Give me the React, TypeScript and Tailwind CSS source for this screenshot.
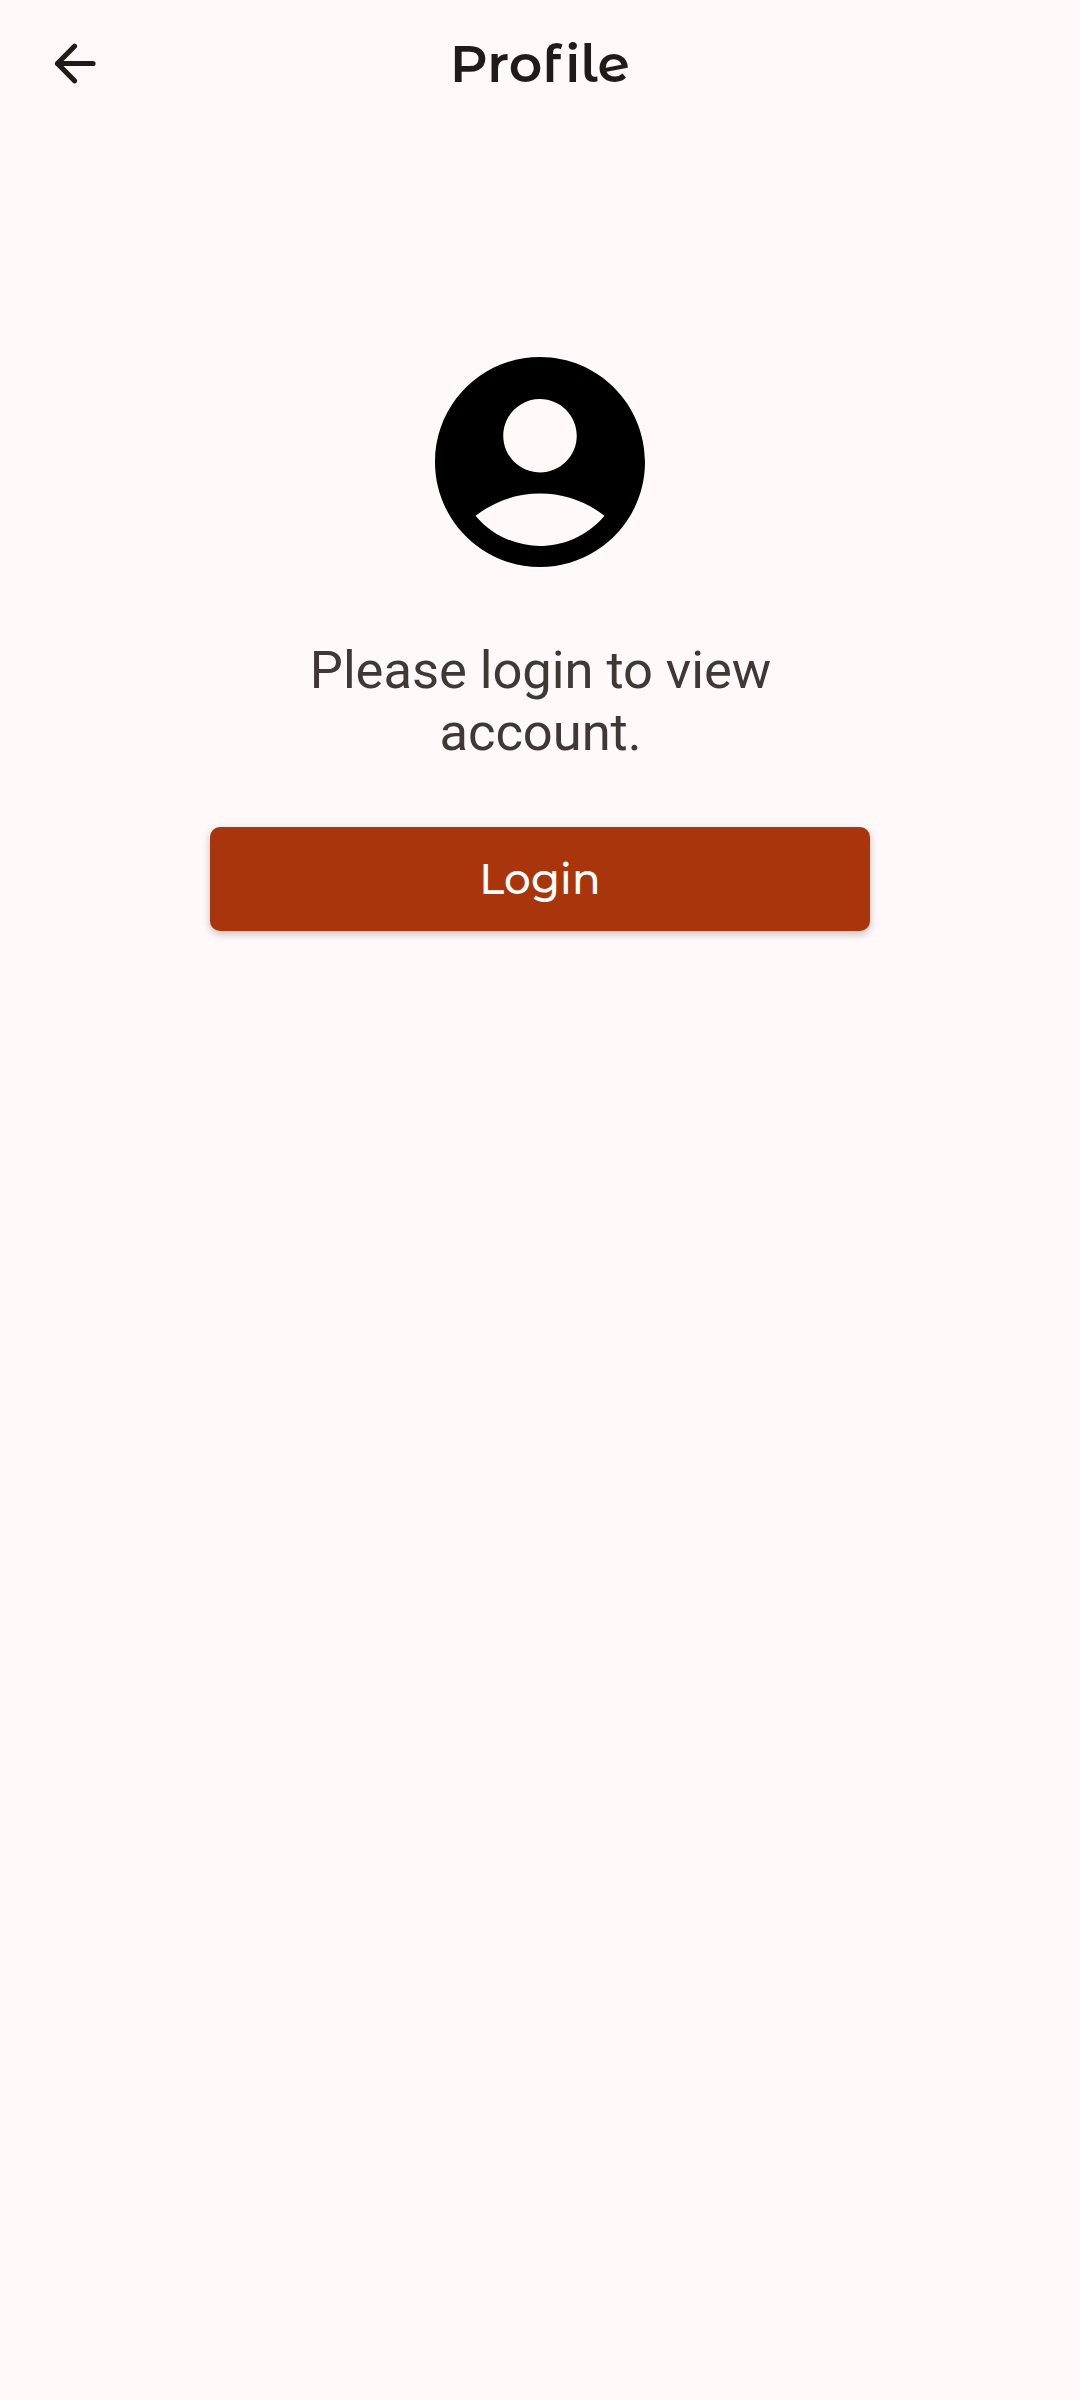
export default function App() {
  return (
    <main className="flex h-[2400px] w-[1080px] flex-col bg-[#fff9f9]">
      <header className="grid h-32 grid-cols-[150px_1fr_150px] items-center">
        <svg className="ml-[54px] h-[42px] w-[42px]" viewBox="0 0 42 42" fill="none" stroke="#201a18" strokeWidth="5.2" strokeLinecap="round" strokeLinejoin="round"><path d="M39 20.5H3.5M20.5 3.2L3.5 20.5L20.5 37.8" /></svg>
        <h1 className="text-center font-['Montserrat_Alternates','Montserrat','Inter',sans-serif] text-[52px] font-semibold tracking-[0.2px] text-[#201a18]">Profile</h1>
      </header>
      <section className="flex flex-col items-center pt-52">
        <svg className="h-[252px] w-[252px]" viewBox="0 0 24 24"><path d="M12 2C6.48 2 2 6.48 2 12s4.48 10 10 10 10-4.48 10-10S17.52 2 12 2zm0 4c1.93 0 3.5 1.57 3.5 3.5S13.93 13 12 13s-3.5-1.57-3.5-3.5S10.07 6 12 6zm0 14c-2.03 0-4.43-.82-6.14-2.88C7.55 15.8 9.68 15 12 15s4.45.8 6.14 2.12C16.43 19.18 14.03 20 12 20z" /></svg>
        <p className="mt-[51px] w-[500px] pl-px text-center font-[Roboto,sans-serif] text-[52.5px] leading-[62px] tracking-[-0.05px] text-[#3f3835]">Please login to view account.</p>
        <button className="mt-16 h-[104px] w-[660px] rounded-[10px] bg-[#a9350c] font-['Montserrat_Alternates','Montserrat','Inter',sans-serif] text-[42px] font-medium tracking-[0.2px] text-white shadow-[0_3px_8px_rgba(0,0,0,0.24)]">Login</button>
      </section>
    </main>
  );
}
